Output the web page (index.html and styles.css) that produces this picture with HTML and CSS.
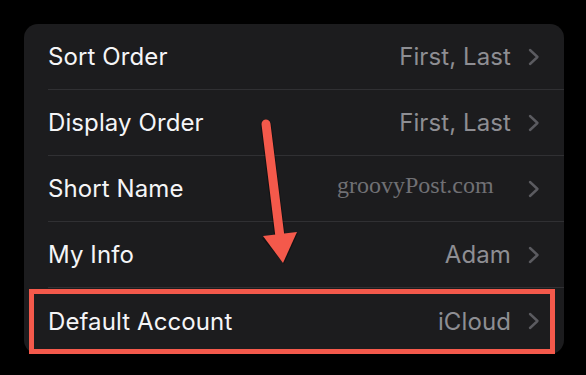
FILE: index.html
```html
<!DOCTYPE html>
<html>
<head>
<meta charset="UTF-8">
<title>Contacts Settings</title>
<link rel="stylesheet" href="styles.css">
</head>
<body>

<div class="card">
  <div class="row">
    <span class="label">Sort Order</span>
    <span class="value">First, Last</span>
    <svg class="chevron" viewBox="0 0 12 18"><path d="M2 2 L9.5 9 L2 16"/></svg>
  </div>
  <div class="row">
    <span class="label">Display Order</span>
    <span class="value">First, Last</span>
    <svg class="chevron" viewBox="0 0 12 18"><path d="M2 2 L9.5 9 L2 16"/></svg>
  </div>
  <div class="row">
    <span class="label">Short Name</span>
    <span class="value"></span>
    <svg class="chevron" viewBox="0 0 12 18"><path d="M2 2 L9.5 9 L2 16"/></svg>
  </div>
  <div class="row">
    <span class="label">My Info</span>
    <span class="value">Adam</span>
    <svg class="chevron" viewBox="0 0 12 18"><path d="M2 2 L9.5 9 L2 16"/></svg>
  </div>
  <div class="row last">
    <span class="label">Default Account</span>
    <span class="value">iCloud</span>
    <svg class="chevron" viewBox="0 0 12 18"><path d="M2 2 L9.5 9 L2 16"/></svg>
  </div>

  <div class="watermark">groovyPost.com</div>
  <div class="highlight"></div>

  <!-- annotation arrow, drawn in card coordinates -->
  <svg class="arrow" viewBox="0 0 540 330" width="540" height="330">
    <line x1="242" y1="101" x2="256" y2="214" class="arrow-shadow"/>
    <polygon points="238,214 274,209 260,240" class="arrow-shadow-head"/>
    <line x1="242" y1="100" x2="256" y2="213" class="arrow-line"/>
    <polygon points="239,212 273,208 259,239" class="arrow-head"/>
  </svg>
</div>

</body>
</html>
```

FILE: styles.css
```css
body {
  margin: 0;
  padding: 24px;
  background-color: #000;
  font-family: Inter, "Noto Sans", sans-serif;
}
.card {
  position: relative;
  width: 540px;
  background-color: #1c1c1e;
  border-radius: 14px;
  overflow: visible;
}
.row {
  display: flex;
  align-items: center;
  height: 66px;
  box-sizing: border-box;
  margin-left: 24px;
  padding-right: 24px;
  border-bottom: 1px solid #303033;
}
.row.last {
  border-bottom: none;
}
.label {
  flex: 1;
  color: #f5f5f7;
  font-size: 24px;
  letter-spacing: 0.1px;
}
.value {
  color: #8e8e93;
  font-size: 24px;
  letter-spacing: 0.1px;
}
.chevron {
  width: 12px;
  height: 18px;
  margin-left: 17px;
  fill: none;
  stroke: #5b5b60;
  stroke-width: 2.4;
  stroke-linecap: round;
  stroke-linejoin: round;
}
.watermark {
  position: absolute;
  left: 313px;
  top: 148px;
  color: #707074;
  font-family: "Liberation Serif", serif;
  font-size: 24px;
}
.highlight {
  position: absolute;
  left: 5px;
  top: 265px;
  width: 526px;
  height: 65px;
  box-sizing: border-box;
  border: 5px solid #f4594b;
}
.arrow {
  position: absolute;
  left: 0;
  top: 0;
  pointer-events: none;
}
.arrow-line {
  stroke: #f4594b;
  stroke-width: 9;
  stroke-linecap: round;
}
.arrow-head {
  fill: #f4594b;
}
.arrow-shadow {
  stroke: rgba(0, 0, 0, 0.35);
  stroke-width: 11;
  stroke-linecap: round;
}
.arrow-shadow-head {
  fill: rgba(0, 0, 0, 0.35);
}
```
